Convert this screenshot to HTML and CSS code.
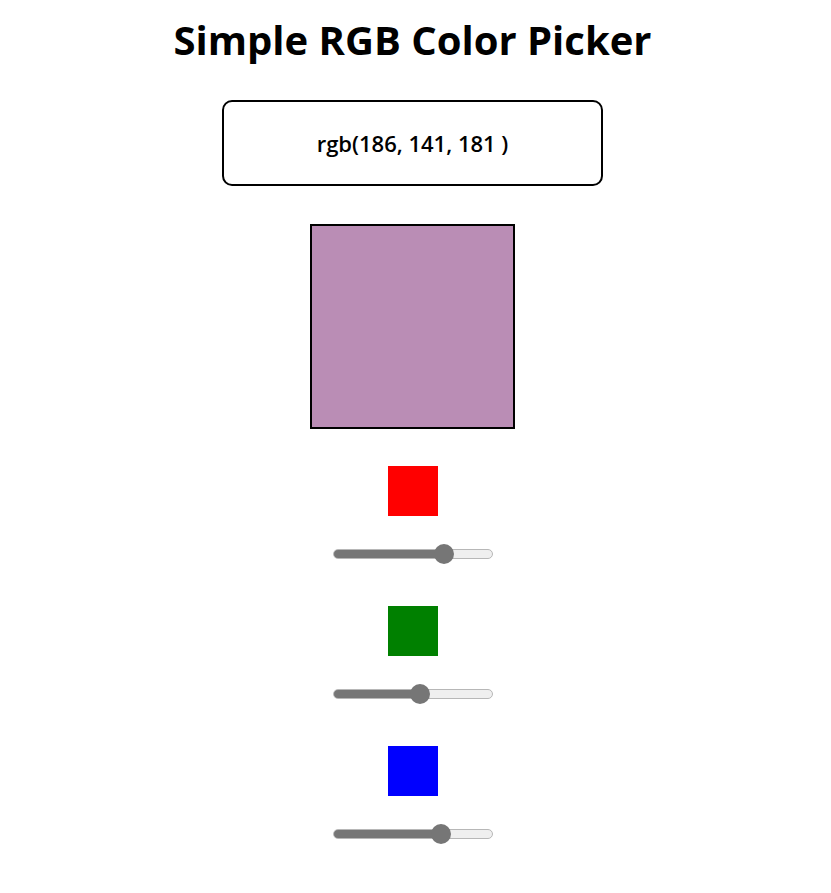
FILE: index.html
```html
<!DOCTYPE html>
<html lang="en">
<head>
<meta charset="utf-8">
<title>Simple RGB Color Picker</title>
<link rel="stylesheet" href="styles.css">
</head>
<body>
<main class="picker">
  <h1 class="title">Simple RGB Color Picker</h1>
  <div class="readout">rgb(186, 141, 181 )</div>
  <div class="preview" style="background: rgb(186, 141, 181);"></div>
  <section class="channel">
    <div class="swatch swatch-red"></div>
    <input class="slider" type="range" min="0" max="255" value="186" style="--v: 186;">
  </section>
  <section class="channel">
    <div class="swatch swatch-green"></div>
    <input class="slider" type="range" min="0" max="255" value="141" style="--v: 141;">
  </section>
  <section class="channel">
    <div class="swatch swatch-blue"></div>
    <input class="slider" type="range" min="0" max="255" value="181" style="--v: 181;">
  </section>
</main>
</body>
</html>
```
FILE: styles.css
```css
html, body {
  margin: 0;
  padding: 0;
  background: #ffffff;
}

body {
  font-family: "Open Sans", "Noto Sans", Arial, sans-serif;
  color: #000;
}

.picker {
  display: flex;
  flex-direction: column;
  align-items: center;
  padding-right: 6px;
}

.title {
  margin: 13px 0 0;
  font-size: 40px;
  font-weight: 700;
  line-height: 54px;
  letter-spacing: 0;
}

.readout {
  margin-top: 33px;
  box-sizing: border-box;
  width: 381px;
  height: 86px;
  border: 2px solid #000;
  border-radius: 10px;
  display: flex;
  align-items: center;
  justify-content: center;
  font-size: 22px;
  font-weight: 600;
}

.preview {
  margin-top: 38px;
  box-sizing: border-box;
  width: 205px;
  height: 205px;
  border: 2px solid #000;
}

.channel {
  display: flex;
  flex-direction: column;
  align-items: center;
  gap: 28px;
}

.channel:first-of-type {
  margin-top: 37px;
}

.channel + .channel {
  margin-top: 42px;
}

.swatch {
  width: 50px;
  height: 50px;
}

.swatch-red { background: #ff0000; }
.swatch-green { background: #008000; }
.swatch-blue { background: #0000ff; }

.slider {
  -webkit-appearance: none;
  appearance: none;
  width: 160px;
  height: 20px;
  margin: 0;
  background: transparent;
}

.slider::-webkit-slider-runnable-track {
  box-sizing: border-box;
  height: 10px;
  border-radius: 5px;
  border: 1px solid #b7b7b7;
  background: linear-gradient(to right, #767676 calc(10px + 140px * var(--v) / 255), #efefef 0);
}

.slider::-webkit-slider-thumb {
  -webkit-appearance: none;
  appearance: none;
  width: 20px;
  height: 20px;
  margin-top: -6px;
  border-radius: 50%;
  background: #767676;
  border: none;
}
```
